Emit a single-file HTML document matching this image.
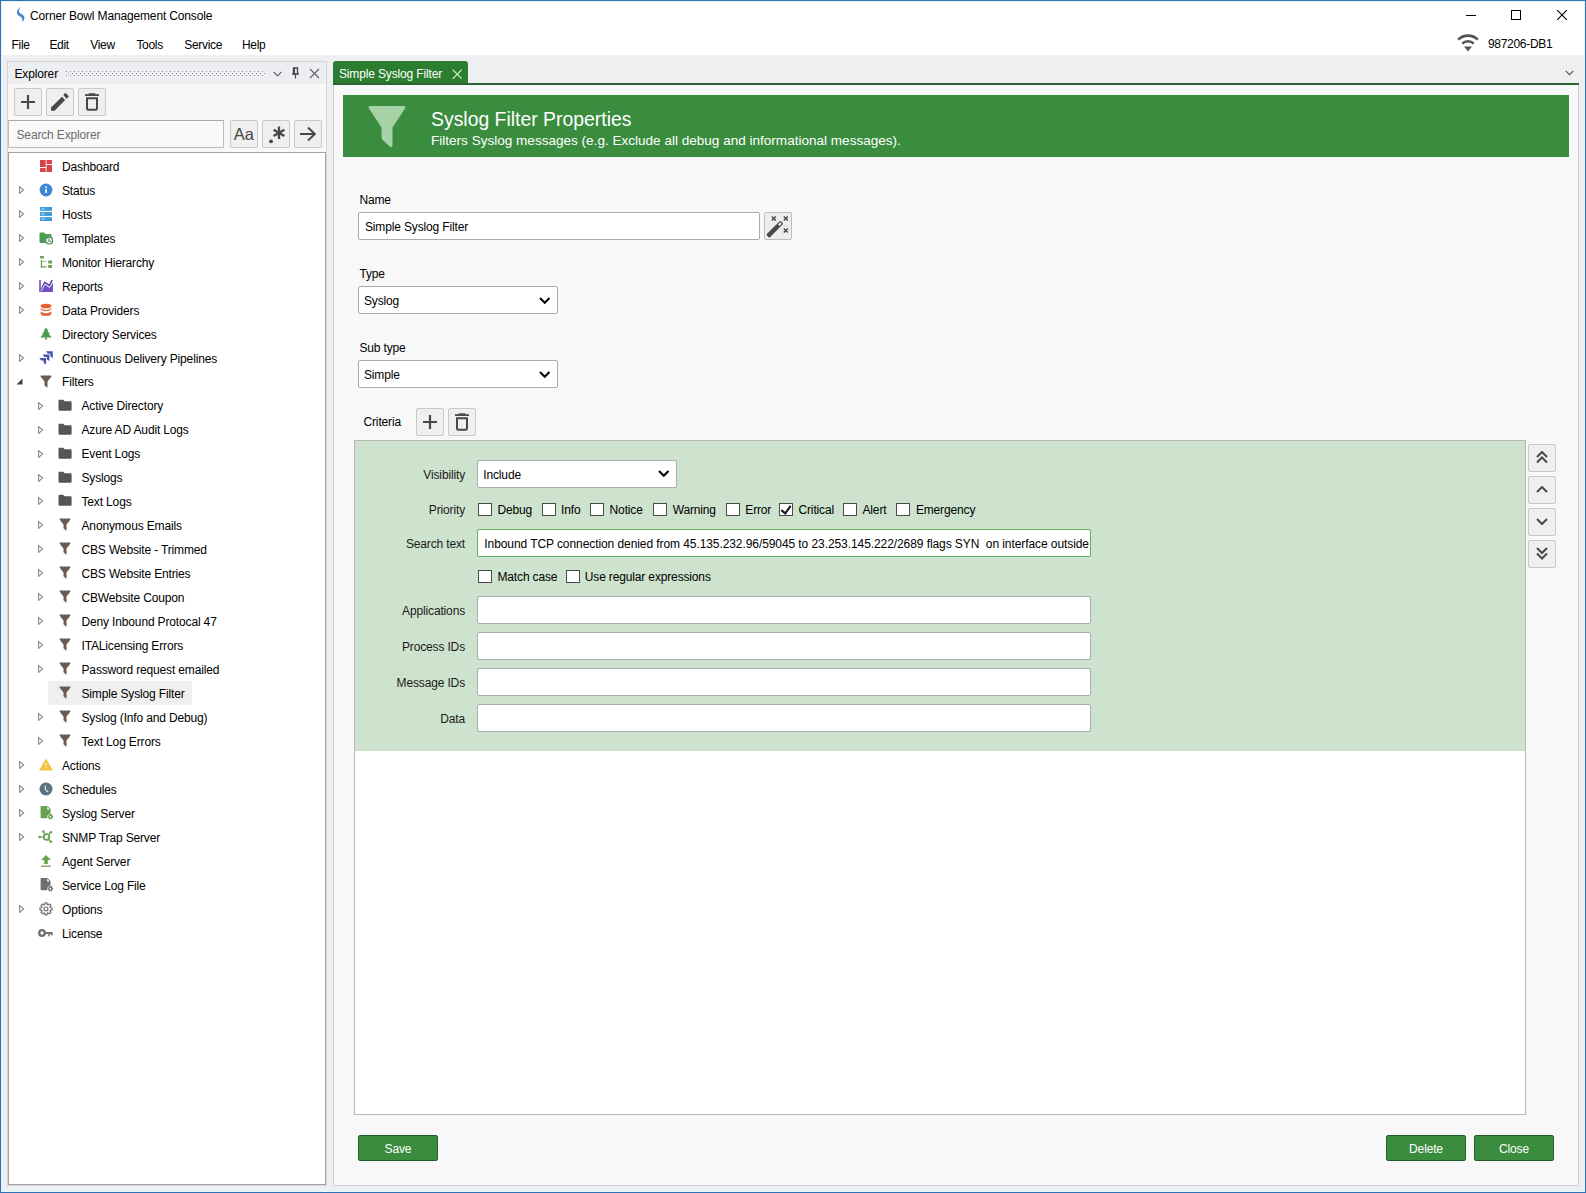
<!DOCTYPE html><html><head><meta charset="utf-8"><style>
html,body{margin:0;padding:0;}
body{width:1586px;height:1193px;overflow:hidden;position:relative;background:#fff;font-family:"Liberation Sans", sans-serif;}
.t{position:absolute;white-space:pre;line-height:1.15;letter-spacing:-0.15px;}
</style></head><body>
<div style="position:absolute;left:0px;top:55px;width:1586px;height:1138px;box-sizing:border-box;background:#eeeff1;"></div>
<svg style="position:absolute;left:4px;top:0px;" width="30" height="30" viewBox="0 0 30 30"><path d="M16.9 7.1 C14.6 8.4 12.7 10.4 12.9 12.9 C13.2 15 15.4 16 16.9 17 C18.4 18 18.9 20 18.1 22.1 C20.1 20.6 20.7 18.6 20.3 16.9 C19.9 15 17.6 14 16.1 13.2 C14.6 12.3 14.5 10 16.9 7.1 Z" fill="#4a88d6"/></svg>
<div class="t" style="left:30px;top:10.04px;font-size:12px;color:#000;">Corner Bowl Management Console</div>
<div style="position:absolute;left:1466px;top:15px;width:10px;height:1px;box-sizing:border-box;background:#000;"></div>
<div style="position:absolute;left:1511px;top:10px;width:10px;height:10px;box-sizing:border-box;border:1px solid #000;"></div>
<svg style="position:absolute;left:1557px;top:10px;" width="10" height="10" viewBox="0 0 10 10"><path d="M0 0L10 10M10 0L0 10" stroke="#000" stroke-width="1.1"/></svg>
<div class="t" style="left:11.5px;top:38.84px;font-size:12px;color:#000;letter-spacing:-0.3px;">File</div>
<div class="t" style="left:49.4px;top:38.84px;font-size:12px;color:#000;letter-spacing:-0.3px;">Edit</div>
<div class="t" style="left:90.2px;top:38.84px;font-size:12px;color:#000;letter-spacing:-0.3px;">View</div>
<div class="t" style="left:136.4px;top:38.84px;font-size:12px;color:#000;letter-spacing:-0.3px;">Tools</div>
<div class="t" style="left:184.2px;top:38.84px;font-size:12px;color:#000;letter-spacing:-0.3px;">Service</div>
<div class="t" style="left:242px;top:38.84px;font-size:12px;color:#000;letter-spacing:-0.3px;">Help</div>
<svg style="position:absolute;left:1457px;top:34px;" width="22" height="18" viewBox="0 0 22 18"><path d="M1.2 5.6 A14 14 0 0 1 20.8 5.6" fill="none" stroke="#555" stroke-width="2.6"/><path d="M5.2 9.6 A8.5 8.5 0 0 1 16.8 9.6" fill="none" stroke="#555" stroke-width="2.6"/><path d="M7 12.5 L15 12.5 L11 17.5 Z" fill="#555"/></svg>
<div class="t" style="left:1488px;top:37.74px;font-size:12px;color:#000;letter-spacing:-0.3px;">987206-DB1</div>
<div style="position:absolute;left:7px;top:61px;width:320px;height:1125px;box-sizing:border-box;border:1px solid #d5d5d5;background:#f7f7f7;"></div>
<div style="position:absolute;left:8px;top:62px;width:318px;height:22px;box-sizing:border-box;background:#eceef1;"></div>
<div class="t" style="left:14.5px;top:67.64px;font-size:12px;color:#000;">Explorer</div>
<svg style="position:absolute;left:66px;top:71px;" width="200" height="6" viewBox="0 0 200 6"><rect x="0" y="0" width="1" height="1" fill="#8e8e8e"/><rect x="0" y="4" width="1" height="1" fill="#8e8e8e"/><rect x="2" y="2" width="1" height="1" fill="#8e8e8e"/><rect x="4" y="0" width="1" height="1" fill="#8e8e8e"/><rect x="4" y="4" width="1" height="1" fill="#8e8e8e"/><rect x="6" y="2" width="1" height="1" fill="#8e8e8e"/><rect x="8" y="0" width="1" height="1" fill="#8e8e8e"/><rect x="8" y="4" width="1" height="1" fill="#8e8e8e"/><rect x="10" y="2" width="1" height="1" fill="#8e8e8e"/><rect x="12" y="0" width="1" height="1" fill="#8e8e8e"/><rect x="12" y="4" width="1" height="1" fill="#8e8e8e"/><rect x="14" y="2" width="1" height="1" fill="#8e8e8e"/><rect x="16" y="0" width="1" height="1" fill="#8e8e8e"/><rect x="16" y="4" width="1" height="1" fill="#8e8e8e"/><rect x="18" y="2" width="1" height="1" fill="#8e8e8e"/><rect x="20" y="0" width="1" height="1" fill="#8e8e8e"/><rect x="20" y="4" width="1" height="1" fill="#8e8e8e"/><rect x="22" y="2" width="1" height="1" fill="#8e8e8e"/><rect x="24" y="0" width="1" height="1" fill="#8e8e8e"/><rect x="24" y="4" width="1" height="1" fill="#8e8e8e"/><rect x="26" y="2" width="1" height="1" fill="#8e8e8e"/><rect x="28" y="0" width="1" height="1" fill="#8e8e8e"/><rect x="28" y="4" width="1" height="1" fill="#8e8e8e"/><rect x="30" y="2" width="1" height="1" fill="#8e8e8e"/><rect x="32" y="0" width="1" height="1" fill="#8e8e8e"/><rect x="32" y="4" width="1" height="1" fill="#8e8e8e"/><rect x="34" y="2" width="1" height="1" fill="#8e8e8e"/><rect x="36" y="0" width="1" height="1" fill="#8e8e8e"/><rect x="36" y="4" width="1" height="1" fill="#8e8e8e"/><rect x="38" y="2" width="1" height="1" fill="#8e8e8e"/><rect x="40" y="0" width="1" height="1" fill="#8e8e8e"/><rect x="40" y="4" width="1" height="1" fill="#8e8e8e"/><rect x="42" y="2" width="1" height="1" fill="#8e8e8e"/><rect x="44" y="0" width="1" height="1" fill="#8e8e8e"/><rect x="44" y="4" width="1" height="1" fill="#8e8e8e"/><rect x="46" y="2" width="1" height="1" fill="#8e8e8e"/><rect x="48" y="0" width="1" height="1" fill="#8e8e8e"/><rect x="48" y="4" width="1" height="1" fill="#8e8e8e"/><rect x="50" y="2" width="1" height="1" fill="#8e8e8e"/><rect x="52" y="0" width="1" height="1" fill="#8e8e8e"/><rect x="52" y="4" width="1" height="1" fill="#8e8e8e"/><rect x="54" y="2" width="1" height="1" fill="#8e8e8e"/><rect x="56" y="0" width="1" height="1" fill="#8e8e8e"/><rect x="56" y="4" width="1" height="1" fill="#8e8e8e"/><rect x="58" y="2" width="1" height="1" fill="#8e8e8e"/><rect x="60" y="0" width="1" height="1" fill="#8e8e8e"/><rect x="60" y="4" width="1" height="1" fill="#8e8e8e"/><rect x="62" y="2" width="1" height="1" fill="#8e8e8e"/><rect x="64" y="0" width="1" height="1" fill="#8e8e8e"/><rect x="64" y="4" width="1" height="1" fill="#8e8e8e"/><rect x="66" y="2" width="1" height="1" fill="#8e8e8e"/><rect x="68" y="0" width="1" height="1" fill="#8e8e8e"/><rect x="68" y="4" width="1" height="1" fill="#8e8e8e"/><rect x="70" y="2" width="1" height="1" fill="#8e8e8e"/><rect x="72" y="0" width="1" height="1" fill="#8e8e8e"/><rect x="72" y="4" width="1" height="1" fill="#8e8e8e"/><rect x="74" y="2" width="1" height="1" fill="#8e8e8e"/><rect x="76" y="0" width="1" height="1" fill="#8e8e8e"/><rect x="76" y="4" width="1" height="1" fill="#8e8e8e"/><rect x="78" y="2" width="1" height="1" fill="#8e8e8e"/><rect x="80" y="0" width="1" height="1" fill="#8e8e8e"/><rect x="80" y="4" width="1" height="1" fill="#8e8e8e"/><rect x="82" y="2" width="1" height="1" fill="#8e8e8e"/><rect x="84" y="0" width="1" height="1" fill="#8e8e8e"/><rect x="84" y="4" width="1" height="1" fill="#8e8e8e"/><rect x="86" y="2" width="1" height="1" fill="#8e8e8e"/><rect x="88" y="0" width="1" height="1" fill="#8e8e8e"/><rect x="88" y="4" width="1" height="1" fill="#8e8e8e"/><rect x="90" y="2" width="1" height="1" fill="#8e8e8e"/><rect x="92" y="0" width="1" height="1" fill="#8e8e8e"/><rect x="92" y="4" width="1" height="1" fill="#8e8e8e"/><rect x="94" y="2" width="1" height="1" fill="#8e8e8e"/><rect x="96" y="0" width="1" height="1" fill="#8e8e8e"/><rect x="96" y="4" width="1" height="1" fill="#8e8e8e"/><rect x="98" y="2" width="1" height="1" fill="#8e8e8e"/><rect x="100" y="0" width="1" height="1" fill="#8e8e8e"/><rect x="100" y="4" width="1" height="1" fill="#8e8e8e"/><rect x="102" y="2" width="1" height="1" fill="#8e8e8e"/><rect x="104" y="0" width="1" height="1" fill="#8e8e8e"/><rect x="104" y="4" width="1" height="1" fill="#8e8e8e"/><rect x="106" y="2" width="1" height="1" fill="#8e8e8e"/><rect x="108" y="0" width="1" height="1" fill="#8e8e8e"/><rect x="108" y="4" width="1" height="1" fill="#8e8e8e"/><rect x="110" y="2" width="1" height="1" fill="#8e8e8e"/><rect x="112" y="0" width="1" height="1" fill="#8e8e8e"/><rect x="112" y="4" width="1" height="1" fill="#8e8e8e"/><rect x="114" y="2" width="1" height="1" fill="#8e8e8e"/><rect x="116" y="0" width="1" height="1" fill="#8e8e8e"/><rect x="116" y="4" width="1" height="1" fill="#8e8e8e"/><rect x="118" y="2" width="1" height="1" fill="#8e8e8e"/><rect x="120" y="0" width="1" height="1" fill="#8e8e8e"/><rect x="120" y="4" width="1" height="1" fill="#8e8e8e"/><rect x="122" y="2" width="1" height="1" fill="#8e8e8e"/><rect x="124" y="0" width="1" height="1" fill="#8e8e8e"/><rect x="124" y="4" width="1" height="1" fill="#8e8e8e"/><rect x="126" y="2" width="1" height="1" fill="#8e8e8e"/><rect x="128" y="0" width="1" height="1" fill="#8e8e8e"/><rect x="128" y="4" width="1" height="1" fill="#8e8e8e"/><rect x="130" y="2" width="1" height="1" fill="#8e8e8e"/><rect x="132" y="0" width="1" height="1" fill="#8e8e8e"/><rect x="132" y="4" width="1" height="1" fill="#8e8e8e"/><rect x="134" y="2" width="1" height="1" fill="#8e8e8e"/><rect x="136" y="0" width="1" height="1" fill="#8e8e8e"/><rect x="136" y="4" width="1" height="1" fill="#8e8e8e"/><rect x="138" y="2" width="1" height="1" fill="#8e8e8e"/><rect x="140" y="0" width="1" height="1" fill="#8e8e8e"/><rect x="140" y="4" width="1" height="1" fill="#8e8e8e"/><rect x="142" y="2" width="1" height="1" fill="#8e8e8e"/><rect x="144" y="0" width="1" height="1" fill="#8e8e8e"/><rect x="144" y="4" width="1" height="1" fill="#8e8e8e"/><rect x="146" y="2" width="1" height="1" fill="#8e8e8e"/><rect x="148" y="0" width="1" height="1" fill="#8e8e8e"/><rect x="148" y="4" width="1" height="1" fill="#8e8e8e"/><rect x="150" y="2" width="1" height="1" fill="#8e8e8e"/><rect x="152" y="0" width="1" height="1" fill="#8e8e8e"/><rect x="152" y="4" width="1" height="1" fill="#8e8e8e"/><rect x="154" y="2" width="1" height="1" fill="#8e8e8e"/><rect x="156" y="0" width="1" height="1" fill="#8e8e8e"/><rect x="156" y="4" width="1" height="1" fill="#8e8e8e"/><rect x="158" y="2" width="1" height="1" fill="#8e8e8e"/><rect x="160" y="0" width="1" height="1" fill="#8e8e8e"/><rect x="160" y="4" width="1" height="1" fill="#8e8e8e"/><rect x="162" y="2" width="1" height="1" fill="#8e8e8e"/><rect x="164" y="0" width="1" height="1" fill="#8e8e8e"/><rect x="164" y="4" width="1" height="1" fill="#8e8e8e"/><rect x="166" y="2" width="1" height="1" fill="#8e8e8e"/><rect x="168" y="0" width="1" height="1" fill="#8e8e8e"/><rect x="168" y="4" width="1" height="1" fill="#8e8e8e"/><rect x="170" y="2" width="1" height="1" fill="#8e8e8e"/><rect x="172" y="0" width="1" height="1" fill="#8e8e8e"/><rect x="172" y="4" width="1" height="1" fill="#8e8e8e"/><rect x="174" y="2" width="1" height="1" fill="#8e8e8e"/><rect x="176" y="0" width="1" height="1" fill="#8e8e8e"/><rect x="176" y="4" width="1" height="1" fill="#8e8e8e"/><rect x="178" y="2" width="1" height="1" fill="#8e8e8e"/><rect x="180" y="0" width="1" height="1" fill="#8e8e8e"/><rect x="180" y="4" width="1" height="1" fill="#8e8e8e"/><rect x="182" y="2" width="1" height="1" fill="#8e8e8e"/><rect x="184" y="0" width="1" height="1" fill="#8e8e8e"/><rect x="184" y="4" width="1" height="1" fill="#8e8e8e"/><rect x="186" y="2" width="1" height="1" fill="#8e8e8e"/><rect x="188" y="0" width="1" height="1" fill="#8e8e8e"/><rect x="188" y="4" width="1" height="1" fill="#8e8e8e"/><rect x="190" y="2" width="1" height="1" fill="#8e8e8e"/><rect x="192" y="0" width="1" height="1" fill="#8e8e8e"/><rect x="192" y="4" width="1" height="1" fill="#8e8e8e"/><rect x="194" y="2" width="1" height="1" fill="#8e8e8e"/><rect x="196" y="0" width="1" height="1" fill="#8e8e8e"/><rect x="196" y="4" width="1" height="1" fill="#8e8e8e"/><rect x="198" y="2" width="1" height="1" fill="#8e8e8e"/></svg>
<svg style="position:absolute;left:273px;top:71px;" width="9" height="6" viewBox="0 0 9 6"><path d="M0.5 0.8 L4.5 4.8 L8.5 0.8" fill="none" stroke="#555" stroke-width="1.1"/></svg>
<svg style="position:absolute;left:291px;top:67px;" width="9" height="12" viewBox="0 0 9 12"><path d="M2.5 1 H6.5 V7 H2.5 Z M1 7 H8" fill="none" stroke="#444" stroke-width="1.3"/><path d="M4.5 7 V11.5" stroke="#444" stroke-width="1.2"/><rect x="2.5" y="1" width="1.5" height="6" fill="#444"/></svg>
<svg style="position:absolute;left:309px;top:68px;" width="11" height="11" viewBox="0 0 11 11"><path d="M1 1L10 10M10 1L1 10" stroke="#5e5e5e" stroke-width="1.1"/></svg>
<div style="position:absolute;left:14px;top:88px;width:28px;height:28px;box-sizing:border-box;background:#efefef;border:1px solid #c9c9c9;border-radius:2px;"></div>
<svg style="position:absolute;left:20.0px;top:94.0px;" width="16" height="16" viewBox="0 0 16 16"><path d="M8.0 1V15M1 8.0H15" stroke="#484848" stroke-width="2.2"/></svg>
<div style="position:absolute;left:46px;top:88px;width:28px;height:28px;box-sizing:border-box;background:#efefef;border:1px solid #c9c9c9;border-radius:2px;"></div>
<svg style="position:absolute;left:51px;top:92px;" width="19" height="19" viewBox="0 0 19 19"><path d="M0 15.5 V18.7 H3.6 L14.1 8.1 L11.1 4.8 Z" fill="#484848"/><path d="M12.3 3 L14.5 0.8 L17.9 4.4 L15.5 6.7 Z" fill="#484848"/></svg>
<div style="position:absolute;left:78px;top:88px;width:28px;height:28px;box-sizing:border-box;background:#efefef;border:1px solid #c9c9c9;border-radius:2px;"></div>
<svg style="position:absolute;left:84px;top:93px;" width="16" height="18" viewBox="0 0 16 18"><rect x="1" y="1.2" width="14" height="1.8" fill="#484848"/><rect x="4.5" y="0.3" width="7" height="1.4" rx="0.6" fill="#484848"/><path d="M3 5.2 H13 V15.6 Q13 16.8 11.8 16.8 H4.2 Q3 16.8 3 15.6 Z" fill="none" stroke="#484848" stroke-width="2"/></svg>
<div style="position:absolute;left:8px;top:120px;width:216px;height:28px;box-sizing:border-box;background:#f9f9f9;border:1px solid #bdbdbd;border-top-color:#a9a9a9;"></div>
<div class="t" style="left:16.5px;top:128.64px;font-size:12px;color:#6d6d6d;">Search Explorer</div>
<div style="position:absolute;left:230px;top:120px;width:28px;height:28px;box-sizing:border-box;background:#efefef;border:1px solid #c9c9c9;border-radius:2px;"></div>
<div class="t" style="left:233.8px;top:124.60px;font-size:16.5px;color:#444;letter-spacing:0;">Aa</div>
<div style="position:absolute;left:262px;top:120px;width:28px;height:28px;box-sizing:border-box;background:#efefef;border:1px solid #c9c9c9;border-radius:2px;"></div>
<svg style="position:absolute;left:266px;top:124px;" width="20" height="20" viewBox="0 0 20 20"><circle cx="5" cy="17.3" r="1.9" fill="#484848"/><g stroke="#484848" stroke-width="2.3"><path d="M13 2.6V15M7.6 5.7L18.4 11.9M7.6 11.9L18.4 5.7"/></g></svg>
<div style="position:absolute;left:294px;top:120px;width:28px;height:28px;box-sizing:border-box;background:#efefef;border:1px solid #c9c9c9;border-radius:2px;"></div>
<svg style="position:absolute;left:299px;top:126px;" width="18" height="16" viewBox="0 0 18 16"><path d="M1 8H16M9 1.5L15.8 8L9 14.5" fill="none" stroke="#484848" stroke-width="2"/></svg>
<div style="position:absolute;left:8px;top:152px;width:318px;height:1033px;box-sizing:border-box;background:#fff;border:1px solid #a3a3a3;"></div>
<svg style="position:absolute;left:39px;top:159px;" width="14" height="14" viewBox="0 0 14 14"><rect x="1" y="1" width="5.7" height="7" fill="#d9434a"/><rect x="1" y="9" width="5.7" height="4" fill="#d9434a"/><rect x="7.5" y="1" width="5.5" height="4" fill="#d9434a"/><rect x="7.5" y="6" width="5.5" height="7" fill="#d9434a"/></svg>
<div class="t" style="left:62px;top:160.74px;font-size:12px;color:#000;">Dashboard</div>
<svg style="position:absolute;left:18.6px;top:186px;" width="6" height="8" viewBox="0 0 6 8"><path d="M0.6 0.6 L4.6 4 L0.6 7.4 Z" fill="none" stroke="#8a8a8a" stroke-width="1.1"/></svg>
<svg style="position:absolute;left:39px;top:183px;" width="14" height="14" viewBox="0 0 14 14"><circle cx="7" cy="7" r="6.4" fill="#3f87d8"/><rect x="6.1" y="6.2" width="1.8" height="3.6" fill="#fff"/><circle cx="7" cy="4.2" r="0.95" fill="#fff"/></svg>
<div class="t" style="left:62px;top:184.71px;font-size:12px;color:#000;">Status</div>
<svg style="position:absolute;left:18.6px;top:210px;" width="6" height="8" viewBox="0 0 6 8"><path d="M0.6 0.6 L4.6 4 L0.6 7.4 Z" fill="none" stroke="#8a8a8a" stroke-width="1.1"/></svg>
<svg style="position:absolute;left:39px;top:207px;" width="14" height="14" viewBox="0 0 14 14"><rect x="1" y="0" width="12" height="3.8" fill="#3b9bdc"/><rect x="2.4" y="1.4" width="1.1" height="1.1" fill="#fff"/><rect x="4.4" y="1.4" width="1.1" height="1.1" fill="#fff"/><rect x="1" y="5.1" width="12" height="3.8" fill="#3b9bdc"/><rect x="2.4" y="6.5" width="1.1" height="1.1" fill="#fff"/><rect x="4.4" y="6.5" width="1.1" height="1.1" fill="#fff"/><rect x="1" y="10.2" width="12" height="3.8" fill="#3b9bdc"/><rect x="2.4" y="11.6" width="1.1" height="1.1" fill="#fff"/><rect x="4.4" y="11.6" width="1.1" height="1.1" fill="#fff"/></svg>
<div class="t" style="left:62px;top:208.68px;font-size:12px;color:#000;">Hosts</div>
<svg style="position:absolute;left:18.6px;top:234px;" width="6" height="8" viewBox="0 0 6 8"><path d="M0.6 0.6 L4.6 4 L0.6 7.4 Z" fill="none" stroke="#8a8a8a" stroke-width="1.1"/></svg>
<svg style="position:absolute;left:39px;top:231px;" width="15" height="14" viewBox="0 0 15 14"><path d="M0.5 2.5 Q0.5 1.5 1.5 1.5 H5 L6.5 3 H11.5 Q12.5 3 12.5 4 V11 Q12.5 12 11.5 12 H1.5 Q0.5 12 0.5 11 Z" fill="#4b9b55"/><circle cx="10.2" cy="9.6" r="4.2" fill="#fff"/><circle cx="10.2" cy="9.6" r="3.4" fill="none" stroke="#3f7f48" stroke-width="1.2"/><path d="M9.9 7.5 V10.2 H11.9" fill="none" stroke="#3f7f48" stroke-width="1.1"/></svg>
<div class="t" style="left:62px;top:232.65px;font-size:12px;color:#000;">Templates</div>
<svg style="position:absolute;left:18.6px;top:258px;" width="6" height="8" viewBox="0 0 6 8"><path d="M0.6 0.6 L4.6 4 L0.6 7.4 Z" fill="none" stroke="#8a8a8a" stroke-width="1.1"/></svg>
<svg style="position:absolute;left:39px;top:255px;" width="14" height="14" viewBox="0 0 14 14"><rect x="1" y="1" width="3.9" height="2.4" fill="#6e9f56"/><rect x="1.8" y="5" width="1.3" height="7.5" fill="#6e9f56"/><rect x="1.8" y="11.2" width="5.7" height="1.3" fill="#6e9f56"/><rect x="3" y="6" width="4.5" height="1" fill="#9fc08a"/><rect x="9.2" y="5.5" width="3.8" height="3" fill="#6e9f56"/><rect x="9.2" y="10" width="3.8" height="3" fill="#6e9f56"/></svg>
<div class="t" style="left:62px;top:256.62px;font-size:12px;color:#000;">Monitor Hierarchy</div>
<svg style="position:absolute;left:18.6px;top:282px;" width="6" height="8" viewBox="0 0 6 8"><path d="M0.6 0.6 L4.6 4 L0.6 7.4 Z" fill="none" stroke="#8a8a8a" stroke-width="1.1"/></svg>
<svg style="position:absolute;left:39px;top:279px;" width="15" height="14" viewBox="0 0 15 14"><rect x="0.2" y="1" width="1.6" height="12" fill="#6a55b0"/><path d="M1.8 13 V12.2 L5.8 5 L10.5 8.5 L13.9 3.6 V13 Z" fill="#7150c2"/><path d="M2.2 11.1 L5.7 3.5 L10.5 6.6 L13.1 1.2" fill="none" stroke="#5a44a8" stroke-width="1.7"/><path d="M2.4 12 L5.8 5.2 L10.5 8.4 L13.6 4" fill="none" stroke="#f4efff" stroke-width="0.9"/></svg>
<div class="t" style="left:62px;top:280.59px;font-size:12px;color:#000;">Reports</div>
<svg style="position:absolute;left:18.6px;top:306px;" width="6" height="8" viewBox="0 0 6 8"><path d="M0.6 0.6 L4.6 4 L0.6 7.4 Z" fill="none" stroke="#8a8a8a" stroke-width="1.1"/></svg>
<svg style="position:absolute;left:39px;top:303px;" width="14" height="14" viewBox="0 0 14 14"><ellipse cx="7" cy="3" rx="5.4" ry="2.3" fill="#e2602f"/><path d="M1.6 5.2 Q7 8.6 12.4 5.2 V6.6 Q7 10 1.6 6.6 Z" fill="#e4653b"/><path d="M1.6 8.6 Q7 12 12.4 8.6 V10.5 Q12.4 13 7 13 Q1.6 13 1.6 10.5 Z" fill="#e4653b"/></svg>
<div class="t" style="left:62px;top:304.56px;font-size:12px;color:#000;">Data Providers</div>
<svg style="position:absolute;left:39px;top:327px;" width="14" height="14" viewBox="0 0 14 14"><path d="M7 0.5 L9.5 4 H8.5 L11 7 H9.8 L12.8 10.5 H1.2 L4.2 7 H3 L5.5 4 H4.5 Z" fill="#4c9c52"/><rect x="6" y="10.5" width="2" height="2" fill="#4c9c52"/></svg>
<div class="t" style="left:62px;top:328.53px;font-size:12px;color:#000;">Directory Services</div>
<svg style="position:absolute;left:18.6px;top:354px;" width="6" height="8" viewBox="0 0 6 8"><path d="M0.6 0.6 L4.6 4 L0.6 7.4 Z" fill="none" stroke="#8a8a8a" stroke-width="1.1"/></svg>
<svg style="position:absolute;left:39px;top:351px;" width="15" height="14" viewBox="0 0 15 14"><path d="M7.1000000000000005 0.2 H13.8 V6.9 L11.3 5.300000000000001 V2.7 H8.700000000000001 Z" fill="#4754b0"/><path d="M3.7 3.4 H10.4 V10.1 L7.9 8.5 V5.9 H5.300000000000001 Z" fill="#4754b0"/><path d="M0.39999999999999947 6.9 H7.1 V13.600000000000001 L4.6 12.000000000000002 V9.4 H1.9999999999999996 Z" fill="#4754b0"/></svg>
<div class="t" style="left:62px;top:352.50px;font-size:12px;color:#000;">Continuous Delivery Pipelines</div>
<svg style="position:absolute;left:15.6px;top:377.73px;" width="7" height="7" viewBox="0 0 7 7"><path d="M6.5 0.5 V6.5 H0.5 Z" fill="#404040"/></svg>
<svg style="position:absolute;left:39px;top:375px;" width="14" height="14" viewBox="0 0 14 14"><path d="M1.5 1.5 Q1.2 0.5 2.2 0.5 H11.8 Q12.8 0.5 12.5 1.5 L8.5 6.5 V12 Q8.5 12.8 7.8 12.3 L6.2 11 Q5.5 10.5 5.5 10 V6.5 Z" fill="#6e5a54"/></svg>
<div class="t" style="left:62px;top:376.47px;font-size:12px;color:#000;">Filters</div>
<svg style="position:absolute;left:37.6px;top:402px;" width="6" height="8" viewBox="0 0 6 8"><path d="M0.6 0.6 L4.6 4 L0.6 7.4 Z" fill="none" stroke="#8a8a8a" stroke-width="1.1"/></svg>
<svg style="position:absolute;left:58px;top:399px;" width="15" height="14" viewBox="0 0 15 14"><path d="M0.5 1.8 Q0.5 0.8 1.5 0.8 H5.2 L6.6 2.3 H12.6 Q13.6 2.3 13.6 3.3 V10.8 Q13.6 11.8 12.6 11.8 H1.5 Q0.5 11.8 0.5 10.8 Z" fill="#555"/></svg>
<div class="t" style="left:81.5px;top:400.44px;font-size:12px;color:#000;">Active Directory</div>
<svg style="position:absolute;left:37.6px;top:426px;" width="6" height="8" viewBox="0 0 6 8"><path d="M0.6 0.6 L4.6 4 L0.6 7.4 Z" fill="none" stroke="#8a8a8a" stroke-width="1.1"/></svg>
<svg style="position:absolute;left:58px;top:423px;" width="15" height="14" viewBox="0 0 15 14"><path d="M0.5 1.8 Q0.5 0.8 1.5 0.8 H5.2 L6.6 2.3 H12.6 Q13.6 2.3 13.6 3.3 V10.8 Q13.6 11.8 12.6 11.8 H1.5 Q0.5 11.8 0.5 10.8 Z" fill="#555"/></svg>
<div class="t" style="left:81.5px;top:424.41px;font-size:12px;color:#000;">Azure AD Audit Logs</div>
<svg style="position:absolute;left:37.6px;top:450px;" width="6" height="8" viewBox="0 0 6 8"><path d="M0.6 0.6 L4.6 4 L0.6 7.4 Z" fill="none" stroke="#8a8a8a" stroke-width="1.1"/></svg>
<svg style="position:absolute;left:58px;top:447px;" width="15" height="14" viewBox="0 0 15 14"><path d="M0.5 1.8 Q0.5 0.8 1.5 0.8 H5.2 L6.6 2.3 H12.6 Q13.6 2.3 13.6 3.3 V10.8 Q13.6 11.8 12.6 11.8 H1.5 Q0.5 11.8 0.5 10.8 Z" fill="#555"/></svg>
<div class="t" style="left:81.5px;top:448.38px;font-size:12px;color:#000;">Event Logs</div>
<svg style="position:absolute;left:37.6px;top:474px;" width="6" height="8" viewBox="0 0 6 8"><path d="M0.6 0.6 L4.6 4 L0.6 7.4 Z" fill="none" stroke="#8a8a8a" stroke-width="1.1"/></svg>
<svg style="position:absolute;left:58px;top:471px;" width="15" height="14" viewBox="0 0 15 14"><path d="M0.5 1.8 Q0.5 0.8 1.5 0.8 H5.2 L6.6 2.3 H12.6 Q13.6 2.3 13.6 3.3 V10.8 Q13.6 11.8 12.6 11.8 H1.5 Q0.5 11.8 0.5 10.8 Z" fill="#555"/></svg>
<div class="t" style="left:81.5px;top:472.35px;font-size:12px;color:#000;">Syslogs</div>
<svg style="position:absolute;left:37.6px;top:497px;" width="6" height="8" viewBox="0 0 6 8"><path d="M0.6 0.6 L4.6 4 L0.6 7.4 Z" fill="none" stroke="#8a8a8a" stroke-width="1.1"/></svg>
<svg style="position:absolute;left:58px;top:494px;" width="15" height="14" viewBox="0 0 15 14"><path d="M0.5 1.8 Q0.5 0.8 1.5 0.8 H5.2 L6.6 2.3 H12.6 Q13.6 2.3 13.6 3.3 V10.8 Q13.6 11.8 12.6 11.8 H1.5 Q0.5 11.8 0.5 10.8 Z" fill="#555"/></svg>
<div class="t" style="left:81.5px;top:496.32px;font-size:12px;color:#000;">Text Logs</div>
<svg style="position:absolute;left:37.6px;top:521px;" width="6" height="8" viewBox="0 0 6 8"><path d="M0.6 0.6 L4.6 4 L0.6 7.4 Z" fill="none" stroke="#8a8a8a" stroke-width="1.1"/></svg>
<svg style="position:absolute;left:58px;top:518px;" width="14" height="14" viewBox="0 0 14 14"><path d="M1.5 1.5 Q1.2 0.5 2.2 0.5 H11.8 Q12.8 0.5 12.5 1.5 L8.5 6.5 V12 Q8.5 12.8 7.8 12.3 L6.2 11 Q5.5 10.5 5.5 10 V6.5 Z" fill="#6e5a54"/></svg>
<div class="t" style="left:81.5px;top:520.29px;font-size:12px;color:#000;">Anonymous Emails</div>
<svg style="position:absolute;left:37.6px;top:545px;" width="6" height="8" viewBox="0 0 6 8"><path d="M0.6 0.6 L4.6 4 L0.6 7.4 Z" fill="none" stroke="#8a8a8a" stroke-width="1.1"/></svg>
<svg style="position:absolute;left:58px;top:542px;" width="14" height="14" viewBox="0 0 14 14"><path d="M1.5 1.5 Q1.2 0.5 2.2 0.5 H11.8 Q12.8 0.5 12.5 1.5 L8.5 6.5 V12 Q8.5 12.8 7.8 12.3 L6.2 11 Q5.5 10.5 5.5 10 V6.5 Z" fill="#6e5a54"/></svg>
<div class="t" style="left:81.5px;top:544.26px;font-size:12px;color:#000;">CBS Website - Trimmed</div>
<svg style="position:absolute;left:37.6px;top:569px;" width="6" height="8" viewBox="0 0 6 8"><path d="M0.6 0.6 L4.6 4 L0.6 7.4 Z" fill="none" stroke="#8a8a8a" stroke-width="1.1"/></svg>
<svg style="position:absolute;left:58px;top:566px;" width="14" height="14" viewBox="0 0 14 14"><path d="M1.5 1.5 Q1.2 0.5 2.2 0.5 H11.8 Q12.8 0.5 12.5 1.5 L8.5 6.5 V12 Q8.5 12.8 7.8 12.3 L6.2 11 Q5.5 10.5 5.5 10 V6.5 Z" fill="#6e5a54"/></svg>
<div class="t" style="left:81.5px;top:568.23px;font-size:12px;color:#000;">CBS Website Entries</div>
<svg style="position:absolute;left:37.6px;top:593px;" width="6" height="8" viewBox="0 0 6 8"><path d="M0.6 0.6 L4.6 4 L0.6 7.4 Z" fill="none" stroke="#8a8a8a" stroke-width="1.1"/></svg>
<svg style="position:absolute;left:58px;top:590px;" width="14" height="14" viewBox="0 0 14 14"><path d="M1.5 1.5 Q1.2 0.5 2.2 0.5 H11.8 Q12.8 0.5 12.5 1.5 L8.5 6.5 V12 Q8.5 12.8 7.8 12.3 L6.2 11 Q5.5 10.5 5.5 10 V6.5 Z" fill="#6e5a54"/></svg>
<div class="t" style="left:81.5px;top:592.20px;font-size:12px;color:#000;">CBWebsite Coupon</div>
<svg style="position:absolute;left:37.6px;top:617px;" width="6" height="8" viewBox="0 0 6 8"><path d="M0.6 0.6 L4.6 4 L0.6 7.4 Z" fill="none" stroke="#8a8a8a" stroke-width="1.1"/></svg>
<svg style="position:absolute;left:58px;top:614px;" width="14" height="14" viewBox="0 0 14 14"><path d="M1.5 1.5 Q1.2 0.5 2.2 0.5 H11.8 Q12.8 0.5 12.5 1.5 L8.5 6.5 V12 Q8.5 12.8 7.8 12.3 L6.2 11 Q5.5 10.5 5.5 10 V6.5 Z" fill="#6e5a54"/></svg>
<div class="t" style="left:81.5px;top:616.17px;font-size:12px;color:#000;">Deny Inbound Protocal 47</div>
<svg style="position:absolute;left:37.6px;top:641px;" width="6" height="8" viewBox="0 0 6 8"><path d="M0.6 0.6 L4.6 4 L0.6 7.4 Z" fill="none" stroke="#8a8a8a" stroke-width="1.1"/></svg>
<svg style="position:absolute;left:58px;top:638px;" width="14" height="14" viewBox="0 0 14 14"><path d="M1.5 1.5 Q1.2 0.5 2.2 0.5 H11.8 Q12.8 0.5 12.5 1.5 L8.5 6.5 V12 Q8.5 12.8 7.8 12.3 L6.2 11 Q5.5 10.5 5.5 10 V6.5 Z" fill="#6e5a54"/></svg>
<div class="t" style="left:81.5px;top:640.14px;font-size:12px;color:#000;">ITALicensing Errors</div>
<svg style="position:absolute;left:37.6px;top:665px;" width="6" height="8" viewBox="0 0 6 8"><path d="M0.6 0.6 L4.6 4 L0.6 7.4 Z" fill="none" stroke="#8a8a8a" stroke-width="1.1"/></svg>
<svg style="position:absolute;left:58px;top:662px;" width="14" height="14" viewBox="0 0 14 14"><path d="M1.5 1.5 Q1.2 0.5 2.2 0.5 H11.8 Q12.8 0.5 12.5 1.5 L8.5 6.5 V12 Q8.5 12.8 7.8 12.3 L6.2 11 Q5.5 10.5 5.5 10 V6.5 Z" fill="#6e5a54"/></svg>
<div class="t" style="left:81.5px;top:664.11px;font-size:12px;color:#000;">Password request emailed</div>
<div style="position:absolute;left:48px;top:681px;width:144px;height:24px;box-sizing:border-box;background:#efefef;"></div>
<svg style="position:absolute;left:58px;top:686px;" width="14" height="14" viewBox="0 0 14 14"><path d="M1.5 1.5 Q1.2 0.5 2.2 0.5 H11.8 Q12.8 0.5 12.5 1.5 L8.5 6.5 V12 Q8.5 12.8 7.8 12.3 L6.2 11 Q5.5 10.5 5.5 10 V6.5 Z" fill="#6e5a54"/></svg>
<div class="t" style="left:81.5px;top:688.08px;font-size:12px;color:#000;">Simple Syslog Filter</div>
<svg style="position:absolute;left:37.6px;top:713px;" width="6" height="8" viewBox="0 0 6 8"><path d="M0.6 0.6 L4.6 4 L0.6 7.4 Z" fill="none" stroke="#8a8a8a" stroke-width="1.1"/></svg>
<svg style="position:absolute;left:58px;top:710px;" width="14" height="14" viewBox="0 0 14 14"><path d="M1.5 1.5 Q1.2 0.5 2.2 0.5 H11.8 Q12.8 0.5 12.5 1.5 L8.5 6.5 V12 Q8.5 12.8 7.8 12.3 L6.2 11 Q5.5 10.5 5.5 10 V6.5 Z" fill="#6e5a54"/></svg>
<div class="t" style="left:81.5px;top:712.05px;font-size:12px;color:#000;">Syslog (Info and Debug)</div>
<svg style="position:absolute;left:37.6px;top:737px;" width="6" height="8" viewBox="0 0 6 8"><path d="M0.6 0.6 L4.6 4 L0.6 7.4 Z" fill="none" stroke="#8a8a8a" stroke-width="1.1"/></svg>
<svg style="position:absolute;left:58px;top:734px;" width="14" height="14" viewBox="0 0 14 14"><path d="M1.5 1.5 Q1.2 0.5 2.2 0.5 H11.8 Q12.8 0.5 12.5 1.5 L8.5 6.5 V12 Q8.5 12.8 7.8 12.3 L6.2 11 Q5.5 10.5 5.5 10 V6.5 Z" fill="#6e5a54"/></svg>
<div class="t" style="left:81.5px;top:736.02px;font-size:12px;color:#000;">Text Log Errors</div>
<svg style="position:absolute;left:18.6px;top:761px;" width="6" height="8" viewBox="0 0 6 8"><path d="M0.6 0.6 L4.6 4 L0.6 7.4 Z" fill="none" stroke="#8a8a8a" stroke-width="1.1"/></svg>
<svg style="position:absolute;left:39px;top:758px;" width="15" height="14" viewBox="0 0 15 14"><path d="M7 0.5 L14 12.5 H0 Z" fill="#f5c242"/><rect x="6.3" y="4.6" width="1.4" height="3.4" fill="#fbe6a0"/><rect x="6.3" y="9" width="1.4" height="1.2" fill="#fbe6a0"/></svg>
<div class="t" style="left:62px;top:759.99px;font-size:12px;color:#000;">Actions</div>
<svg style="position:absolute;left:18.6px;top:785px;" width="6" height="8" viewBox="0 0 6 8"><path d="M0.6 0.6 L4.6 4 L0.6 7.4 Z" fill="none" stroke="#8a8a8a" stroke-width="1.1"/></svg>
<svg style="position:absolute;left:39px;top:782px;" width="14" height="14" viewBox="0 0 14 14"><circle cx="7" cy="7" r="6.5" fill="#5e727d"/><path d="M6.4 3.6 V7.6 L9.2 10" fill="none" stroke="#dde6ea" stroke-width="1.2"/></svg>
<div class="t" style="left:62px;top:783.96px;font-size:12px;color:#000;">Schedules</div>
<svg style="position:absolute;left:18.6px;top:809px;" width="6" height="8" viewBox="0 0 6 8"><path d="M0.6 0.6 L4.6 4 L0.6 7.4 Z" fill="none" stroke="#8a8a8a" stroke-width="1.1"/></svg>
<svg style="position:absolute;left:39px;top:806px;" width="15" height="15" viewBox="0 0 15 15"><path d="M2.6 -0.2 H8.3 L11.6 3.1 V7.6 Q8.6 8 8.2 11 V12.3 H2.6 Q1.6 12.3 1.6 11.3 V0.8 Q1.6 -0.2 2.6 -0.2 Z" fill="#68a252"/><path d="M8.1 0.7 L10.8 3.4 H8.1 Z" fill="#fff"/><path d="M13.21 9.74 L14.20 9.85 L14.20 11.35 L13.21 11.46 L13.05 11.73 L13.45 12.65 L12.15 13.40 L11.56 12.59 L11.24 12.59 L10.65 13.40 L9.35 12.65 L9.75 11.73 L9.59 11.46 L8.60 11.35 L8.60 9.85 L9.59 9.74 L9.75 9.47 L9.35 8.55 L10.65 7.80 L11.24 8.61 L11.56 8.61 L12.15 7.80 L13.45 8.55 L13.05 9.47 Z" fill="#68a252"/><circle cx="11.4" cy="10.6" r="0.9" fill="#fff"/></svg>
<div class="t" style="left:62px;top:807.93px;font-size:12px;color:#000;">Syslog Server</div>
<svg style="position:absolute;left:18.6px;top:833px;" width="6" height="8" viewBox="0 0 6 8"><path d="M0.6 0.6 L4.6 4 L0.6 7.4 Z" fill="none" stroke="#8a8a8a" stroke-width="1.1"/></svg>
<svg style="position:absolute;left:38px;top:830px;" width="16" height="14" viewBox="0 0 16 14"><g stroke="#68a252" stroke-width="1.2" fill="none"><path d="M1.5 7 H5"/><path d="M7.5 5 L5.5 1.8"/><path d="M10 5 L12.7 2.5"/><path d="M10 9 L12.7 11.5"/></g><circle cx="1.6" cy="7" r="1.3" fill="#68a252"/><circle cx="5.3" cy="1.6" r="1.3" fill="#68a252"/><circle cx="13" cy="2.2" r="1.3" fill="#68a252"/><circle cx="13" cy="11.8" r="1.3" fill="#68a252"/><circle cx="8.5" cy="7" r="2.8" fill="none" stroke="#68a252" stroke-width="1.8"/></svg>
<div class="t" style="left:62px;top:831.90px;font-size:12px;color:#000;">SNMP Trap Server</div>
<svg style="position:absolute;left:39px;top:854px;" width="14" height="14" viewBox="0 0 14 14"><path d="M7 1 L12 6 H8.8 V10 H5.2 V6 H2 Z" fill="#68a252"/><rect x="2" y="11.6" width="10" height="1.1" fill="#5e8e4c"/></svg>
<div class="t" style="left:62px;top:855.87px;font-size:12px;color:#000;">Agent Server</div>
<svg style="position:absolute;left:39px;top:878px;" width="15" height="15" viewBox="0 0 15 15"><path d="M2.6 -0.2 H8.3 L11.6 3.1 V7.6 Q8.6 8 8.2 11 V12.3 H2.6 Q1.6 12.3 1.6 11.3 V0.8 Q1.6 -0.2 2.6 -0.2 Z" fill="#707070"/><path d="M8.1 0.7 L10.8 3.4 H8.1 Z" fill="#fff"/><path d="M13.21 9.74 L14.20 9.85 L14.20 11.35 L13.21 11.46 L13.05 11.73 L13.45 12.65 L12.15 13.40 L11.56 12.59 L11.24 12.59 L10.65 13.40 L9.35 12.65 L9.75 11.73 L9.59 11.46 L8.60 11.35 L8.60 9.85 L9.59 9.74 L9.75 9.47 L9.35 8.55 L10.65 7.80 L11.24 8.61 L11.56 8.61 L12.15 7.80 L13.45 8.55 L13.05 9.47 Z" fill="#707070"/><circle cx="11.4" cy="10.6" r="0.9" fill="#fff"/></svg>
<div class="t" style="left:62px;top:879.84px;font-size:12px;color:#000;">Service Log File</div>
<svg style="position:absolute;left:18.6px;top:905px;" width="6" height="8" viewBox="0 0 6 8"><path d="M0.6 0.6 L4.6 4 L0.6 7.4 Z" fill="none" stroke="#8a8a8a" stroke-width="1.1"/></svg>
<svg style="position:absolute;left:39px;top:902px;" width="15" height="15" viewBox="0 0 15 15"><path d="M11.17 5.50 L13.02 5.90 L13.02 7.90 L11.17 8.30 L10.94 8.86 L11.96 10.45 L10.55 11.86 L8.96 10.84 L8.40 11.07 L8.00 12.92 L6.00 12.92 L5.60 11.07 L5.04 10.84 L3.45 11.86 L2.04 10.45 L3.06 8.86 L2.83 8.30 L0.98 7.90 L0.98 5.90 L2.83 5.50 L3.06 4.94 L2.04 3.35 L3.45 1.94 L5.04 2.96 L5.60 2.73 L6.00 0.88 L8.00 0.88 L8.40 2.73 L8.96 2.96 L10.55 1.94 L11.96 3.35 L10.94 4.94 Z" fill="none" stroke="#6e6e6e" stroke-width="1.2" stroke-linejoin="round"/><circle cx="7" cy="6.9" r="1.9" fill="none" stroke="#6e6e6e" stroke-width="1.2"/></svg>
<div class="t" style="left:62px;top:903.81px;font-size:12px;color:#000;">Options</div>
<svg style="position:absolute;left:38px;top:926px;" width="16" height="14" viewBox="0 0 16 14"><circle cx="4" cy="7" r="2.8" fill="none" stroke="#707070" stroke-width="2.3"/><path d="M6.5 7 H14.5" stroke="#707070" stroke-width="2"/><path d="M11 7 V10.3 M13.8 7 V9.5" stroke="#707070" stroke-width="1.6"/></svg>
<div class="t" style="left:62px;top:927.78px;font-size:12px;color:#000;">License</div>
<div style="position:absolute;left:333px;top:61px;width:135px;height:24px;box-sizing:border-box;background:#2b7e30;border-radius:3px 3px 0 0;"></div>
<div class="t" style="left:339px;top:67.54px;font-size:12px;color:#fff;">Simple Syslog Filter</div>
<svg style="position:absolute;left:451.5px;top:68.5px;" width="10.5" height="10.5" viewBox="0 0 10.5 10.5"><path d="M0.7 0.7L9.8 9.8M9.8 0.7L0.7 9.8" stroke="#d2f5d2" stroke-width="1.2"/></svg>
<svg style="position:absolute;left:1565px;top:70px;" width="9" height="6" viewBox="0 0 9 6"><path d="M0.7 0.8 L4.5 4.6 L8.3 0.8" fill="none" stroke="#555" stroke-width="1.2"/></svg>
<div style="position:absolute;left:333px;top:85px;width:1246px;height:1101px;box-sizing:border-box;background:#f8f8f8;border:1px solid #cfcfcf;border-top:none;"></div>
<div style="position:absolute;left:333px;top:83px;width:1246px;height:2px;box-sizing:border-box;background:#2d6331;"></div>
<div style="position:absolute;left:343px;top:95px;width:1226px;height:62px;box-sizing:border-box;background:#3a8d3e;"></div>
<svg style="position:absolute;left:368px;top:106px;" width="38" height="42" viewBox="0 0 38 42"><path d="M2.5 0 H35.5 Q38.5 0 36.8 2.8 L24.5 21.5 V38.8 Q24.5 42.5 21.5 40.2 L15.2 34.5 Q13.5 33 13.5 31 V21.5 L1.2 2.8 Q-0.5 0 2.5 0 Z" fill="#a6d2a8"/></svg>
<div class="t" style="left:431px;top:108.22px;font-size:19.4px;color:#fff;letter-spacing:0;">Syslog Filter Properties</div>
<div class="t" style="left:431px;top:132.91px;font-size:13.55px;color:#fff;letter-spacing:0;">Filters Syslog messages (e.g. Exclude all debug and informational messages).</div>
<div class="t" style="left:359.4px;top:193.84px;font-size:12px;color:#000;">Name</div>
<div style="position:absolute;left:358px;top:212px;width:402px;height:28px;box-sizing:border-box;background:#fff;border:1px solid #acacac;border-radius:2px;"></div>
<div class="t" style="left:365px;top:220.54px;font-size:12px;color:#000;">Simple Syslog Filter</div>
<div style="position:absolute;left:764px;top:212px;width:28px;height:28px;box-sizing:border-box;background:#ededed;border:1px solid #bdbdbd;border-radius:2px;"></div>
<svg style="position:absolute;left:764px;top:212px;" width="28" height="28" viewBox="0 0 28 28"><g transform="translate(10.8 17.2) rotate(-45)"><rect x="-10" y="-2.2" width="20" height="4.4" rx="0.9" fill="#484848"/><rect x="5.5" y="-1.1" width="3.3" height="2.2" fill="#ededed"/></g><g stroke="#484848" stroke-width="1.5"><path d="M7.8 4.5L11.8 8.5M11.8 4.5L7.8 8.5"/><path d="M19.8 4.5L23.8 8.5M23.8 4.5L19.8 8.5"/><path d="M19.8 16.5L23.8 20.5M23.8 16.5L19.8 20.5"/></g></svg>
<div class="t" style="left:359.4px;top:267.84px;font-size:12px;color:#000;">Type</div>
<div style="position:absolute;left:358px;top:286px;width:200px;height:28px;box-sizing:border-box;background:#fff;border:1px solid #acacac;border-radius:2px;"></div>
<div class="t" style="left:364px;top:294.94px;font-size:12px;color:#000;">Syslog</div>
<svg style="position:absolute;left:539px;top:296.5px;" width="12" height="8" viewBox="0 0 12 8"><path d="M1 1 L5.75 5.75 L10.5 1" fill="none" stroke="#000" stroke-width="2"/></svg>
<div class="t" style="left:359.4px;top:341.84px;font-size:12px;color:#000;">Sub type</div>
<div style="position:absolute;left:358px;top:360px;width:200px;height:28px;box-sizing:border-box;background:#fff;border:1px solid #acacac;border-radius:2px;"></div>
<div class="t" style="left:364px;top:368.64px;font-size:12px;color:#000;">Simple</div>
<svg style="position:absolute;left:539px;top:370.5px;" width="12" height="8" viewBox="0 0 12 8"><path d="M1 1 L5.75 5.75 L10.5 1" fill="none" stroke="#000" stroke-width="2"/></svg>
<div class="t" style="left:363.5px;top:415.64px;font-size:12px;color:#000;">Criteria</div>
<div style="position:absolute;left:416px;top:408px;width:28px;height:28px;box-sizing:border-box;background:#efefef;border:1px solid #c9c9c9;border-radius:2px;"></div>
<svg style="position:absolute;left:422.0px;top:414.0px;" width="16" height="16" viewBox="0 0 16 16"><path d="M8.0 1V15M1 8.0H15" stroke="#484848" stroke-width="2.2"/></svg>
<div style="position:absolute;left:448px;top:408px;width:28px;height:28px;box-sizing:border-box;background:#efefef;border:1px solid #c9c9c9;border-radius:2px;"></div>
<svg style="position:absolute;left:454px;top:413px;" width="16" height="18" viewBox="0 0 16 18"><rect x="1" y="1.2" width="14" height="1.8" fill="#484848"/><rect x="4.5" y="0.3" width="7" height="1.4" rx="0.6" fill="#484848"/><path d="M3 5.2 H13 V15.6 Q13 16.8 11.8 16.8 H4.2 Q3 16.8 3 15.6 Z" fill="none" stroke="#484848" stroke-width="2"/></svg>
<div style="position:absolute;left:354px;top:440px;width:1172px;height:675px;box-sizing:border-box;background:#fff;border:1px solid #b9b9b9;"></div>
<div style="position:absolute;left:355px;top:441px;width:1170px;height:310px;box-sizing:border-box;background:#cde3cd;"></div>
<div class="t" style="right:1121px;top:469.14px;font-size:12px;color:#1a1a1a;">Visibility</div>
<div style="position:absolute;left:477px;top:460px;width:200px;height:28px;box-sizing:border-box;background:#fff;border:1px solid #acacac;border-radius:2px;"></div>
<div class="t" style="left:483.3px;top:469.14px;font-size:12px;color:#000;">Include</div>
<svg style="position:absolute;left:658px;top:470px;" width="12" height="8" viewBox="0 0 12 8"><path d="M1 1 L5.75 5.75 L10.5 1" fill="none" stroke="#000" stroke-width="2"/></svg>
<div class="t" style="right:1121px;top:503.64px;font-size:12px;color:#1a1a1a;">Priority</div>
<div style="position:absolute;left:478px;top:503px;width:14px;height:13px;box-sizing:border-box;background:#fff;border:1px solid #4a4a4a;"></div>
<div class="t" style="left:497.4px;top:504.04px;font-size:12px;color:#000;">Debug</div>
<div style="position:absolute;left:542px;top:503px;width:14px;height:13px;box-sizing:border-box;background:#fff;border:1px solid #4a4a4a;"></div>
<div class="t" style="left:561px;top:504.04px;font-size:12px;color:#000;">Info</div>
<div style="position:absolute;left:590px;top:503px;width:14px;height:13px;box-sizing:border-box;background:#fff;border:1px solid #4a4a4a;"></div>
<div class="t" style="left:609.6px;top:504.04px;font-size:12px;color:#000;">Notice</div>
<div style="position:absolute;left:653px;top:503px;width:14px;height:13px;box-sizing:border-box;background:#fff;border:1px solid #4a4a4a;"></div>
<div class="t" style="left:672.7px;top:504.04px;font-size:12px;color:#000;">Warning</div>
<div style="position:absolute;left:726px;top:503px;width:14px;height:13px;box-sizing:border-box;background:#fff;border:1px solid #4a4a4a;"></div>
<div class="t" style="left:745.3px;top:504.04px;font-size:12px;color:#000;">Error</div>
<div style="position:absolute;left:779px;top:503px;width:14px;height:13px;box-sizing:border-box;background:#fff;border:1px solid #4a4a4a;"></div>
<svg style="position:absolute;left:780px;top:504px;" width="12" height="12" viewBox="0 0 12 12"><path d="M1.3 6.1 L5.3 9.4 L10.6 1.9" fill="none" stroke="#1a1a1a" stroke-width="2.1"/></svg>
<div class="t" style="left:798.5px;top:504.04px;font-size:12px;color:#000;">Critical</div>
<div style="position:absolute;left:843px;top:503px;width:14px;height:13px;box-sizing:border-box;background:#fff;border:1px solid #4a4a4a;"></div>
<div class="t" style="left:862.5px;top:504.04px;font-size:12px;color:#000;">Alert</div>
<div style="position:absolute;left:896px;top:503px;width:14px;height:13px;box-sizing:border-box;background:#fff;border:1px solid #4a4a4a;"></div>
<div class="t" style="left:915.9px;top:504.04px;font-size:12px;color:#000;">Emergency</div>
<div class="t" style="right:1121px;top:538.14px;font-size:12px;color:#1a1a1a;">Search text</div>
<div style="position:absolute;left:477px;top:529px;width:614px;height:28px;box-sizing:border-box;background:#fff;border:1px solid #5fae5f;border-radius:2px;"></div>
<div class="t" style="left:484.3px;top:538.14px;font-size:12px;color:#000;letter-spacing:-0.08px;">Inbound TCP connection denied from 45.135.232.96/59045 to 23.253.145.222/2689 flags SYN  on interface outside</div>
<div style="position:absolute;left:478px;top:570px;width:14px;height:13px;box-sizing:border-box;background:#fff;border:1px solid #4a4a4a;"></div>
<div class="t" style="left:497.5px;top:571.04px;font-size:12px;color:#000;">Match case</div>
<div style="position:absolute;left:566px;top:570px;width:14px;height:13px;box-sizing:border-box;background:#fff;border:1px solid #4a4a4a;"></div>
<div class="t" style="left:584.8px;top:571.04px;font-size:12px;color:#000;">Use regular expressions</div>
<div class="t" style="right:1121px;top:604.84px;font-size:12px;color:#1a1a1a;">Applications</div>
<div style="position:absolute;left:477px;top:596px;width:614px;height:28px;box-sizing:border-box;background:#fff;border:1px solid #acacac;border-radius:2px;"></div>
<div class="t" style="right:1121px;top:640.84px;font-size:12px;color:#1a1a1a;">Process IDs</div>
<div style="position:absolute;left:477px;top:632px;width:614px;height:28px;box-sizing:border-box;background:#fff;border:1px solid #acacac;border-radius:2px;"></div>
<div class="t" style="right:1121px;top:676.84px;font-size:12px;color:#1a1a1a;">Message IDs</div>
<div style="position:absolute;left:477px;top:668px;width:614px;height:28px;box-sizing:border-box;background:#fff;border:1px solid #acacac;border-radius:2px;"></div>
<div class="t" style="right:1121px;top:712.84px;font-size:12px;color:#1a1a1a;">Data</div>
<div style="position:absolute;left:477px;top:704px;width:614px;height:28px;box-sizing:border-box;background:#fff;border:1px solid #acacac;border-radius:2px;"></div>
<div style="position:absolute;left:1528px;top:444px;width:28px;height:28px;box-sizing:border-box;background:#efefef;border:1px solid #c9c9c9;border-radius:2px;"></div>
<svg style="position:absolute;left:1536px;top:451.3px;" width="12" height="13" viewBox="0 0 12 13"><path d="M1 6 L6 1 L11 6" transform="translate(0,0)" fill="none" stroke="#484848" stroke-width="2"/><path d="M1 6 L6 1 L11 6" transform="translate(0,5.5)" fill="none" stroke="#484848" stroke-width="2"/></svg>
<div style="position:absolute;left:1528px;top:476px;width:28px;height:28px;box-sizing:border-box;background:#efefef;border:1px solid #c9c9c9;border-radius:2px;"></div>
<svg style="position:absolute;left:1536px;top:486.1px;" width="12" height="7" viewBox="0 0 12 7"><path d="M1 6 L6 1 L11 6" fill="none" stroke="#484848" stroke-width="2"/></svg>
<div style="position:absolute;left:1528px;top:508px;width:28px;height:28px;box-sizing:border-box;background:#efefef;border:1px solid #c9c9c9;border-radius:2px;"></div>
<svg style="position:absolute;left:1536px;top:518.1px;" width="12" height="7" viewBox="0 0 12 7"><path d="M1 1 L6 6 L11 1" fill="none" stroke="#484848" stroke-width="2"/></svg>
<div style="position:absolute;left:1528px;top:540px;width:28px;height:28px;box-sizing:border-box;background:#efefef;border:1px solid #c9c9c9;border-radius:2px;"></div>
<svg style="position:absolute;left:1536px;top:547.0px;" width="12" height="13" viewBox="0 0 12 13"><path d="M1 1 L6 6 L11 1" transform="translate(0,0)" fill="none" stroke="#484848" stroke-width="2"/><path d="M1 1 L6 6 L11 1" transform="translate(0,5.5)" fill="none" stroke="#484848" stroke-width="2"/></svg>
<div style="position:absolute;left:358px;top:1135px;width:80px;height:26px;box-sizing:border-box;background:#3a8d3e;border:1px solid #1f5f25;border-radius:2px;"></div>
<div class="t" style="left:358px;width:80px;text-align:center;top:1142.94px;font-size:12px;color:#fff;">Save</div>
<div style="position:absolute;left:1386px;top:1135px;width:80px;height:26px;box-sizing:border-box;background:#3a8d3e;border:1px solid #1f5f25;border-radius:2px;"></div>
<div class="t" style="left:1386px;width:80px;text-align:center;top:1142.94px;font-size:12px;color:#fff;">Delete</div>
<div style="position:absolute;left:1474px;top:1135px;width:80px;height:26px;box-sizing:border-box;background:#3a8d3e;border:1px solid #1f5f25;border-radius:2px;"></div>
<div class="t" style="left:1474px;width:80px;text-align:center;top:1142.94px;font-size:12px;color:#fff;">Close</div>
<div style="position:absolute;left:1px;top:1px;width:1584px;height:1px;box-sizing:border-box;background:#e4f6fb;"></div>
<div style="position:absolute;left:1px;top:1px;width:1px;height:1191px;box-sizing:border-box;background:#e4f6fb;"></div>
<div style="position:absolute;left:1584px;top:1px;width:1px;height:1191px;box-sizing:border-box;background:#e4f6fb;"></div>
<div style="position:absolute;left:1px;top:1191px;width:1584px;height:1px;box-sizing:border-box;background:#e4f6fb;"></div>
<div style="position:absolute;left:0px;top:0px;width:1586px;height:1px;box-sizing:border-box;background:#2f73b4;"></div>
<div style="position:absolute;left:0px;top:0px;width:1px;height:1193px;box-sizing:border-box;background:#2f73b4;"></div>
<div style="position:absolute;left:1585px;top:0px;width:1px;height:1193px;box-sizing:border-box;background:#2f73b4;"></div>
<div style="position:absolute;left:0px;top:1192px;width:1586px;height:1px;box-sizing:border-box;background:#2f73b4;"></div>
</body></html>
